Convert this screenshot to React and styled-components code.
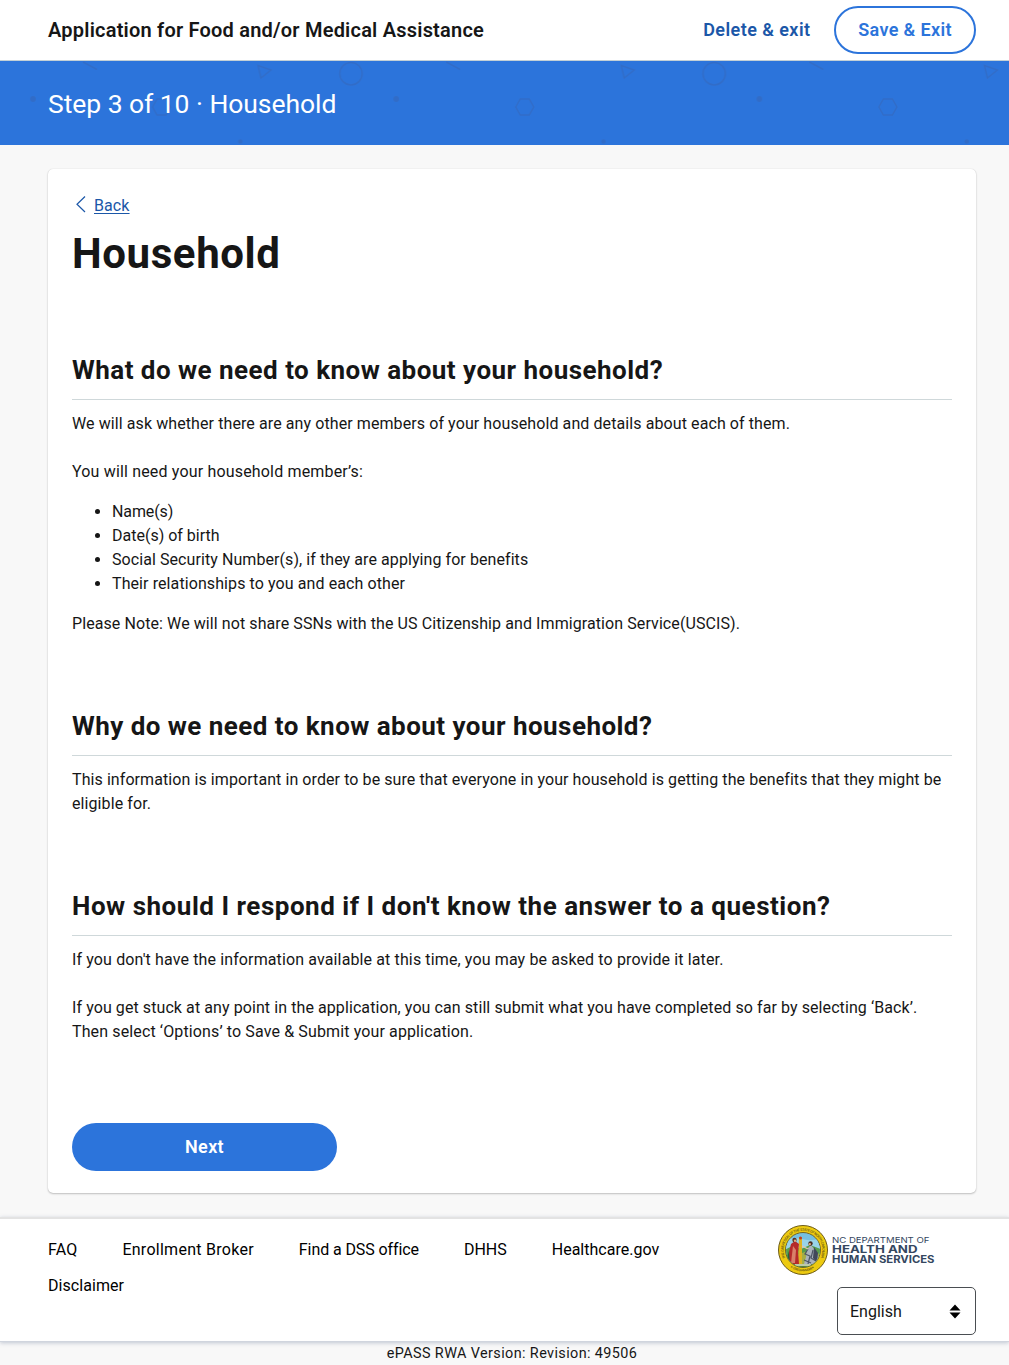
import React from "react";
import styled, { createGlobalStyle } from "styled-components";

const GlobalStyle = createGlobalStyle`
  * { box-sizing: border-box; }
  body {
    margin: 0;
    background: #f8f8f8;
    color: #161616;
    font: 400 16px/24px Roboto, "Liberation Sans", sans-serif;
  }
  h1, h2, p, ul { margin: 0; }
`;

const Page = styled.div`
  height: 1365px;
  overflow: hidden;
  display: flex;
  flex-direction: column;
`;

const Line = styled.span`
  display: block;
  white-space: nowrap;
  letter-spacing: ${(p) => p.$ls || 0}px;
`;

const Header = styled.header`
  flex: none;
  height: 61px;
  padding: 0 33px 0 48px;
  display: flex;
  align-items: center;
  background: #fff;
  border-bottom: 1px solid #c3d0d6;
`;

const AppTitle = styled.div`
  flex: 1;
  font-size: 20px;
  font-weight: 600;
  letter-spacing: 0.21px;
`;

const DeleteButton = styled.button`
  border: 0;
  padding: 0;
  margin-right: 23.5px;
  background: none;
  color: #1b57a8;
  font: 600 18px/24px Roboto, sans-serif;
  letter-spacing: 0.44px;
`;

const SaveButton = styled.button`
  width: 142px;
  height: 48px;
  padding: 0;
  border: 2px solid #2c74db;
  border-radius: 24px;
  background: #fff;
  color: #2c74db;
  font: 600 18px/24px Roboto, sans-serif;
  letter-spacing: 0.36px;
`;

const Banner = styled.div`
  flex: none;
  height: 84px;
  display: grid;
  align-items: center;
  background: #2c74db;
  color: #fff;
  > * { grid-area: 1 / 1; }
`;

const BannerArt = styled.svg`
  width: 100%;
  height: 84px;
`;

const StepTitle = styled.div`
  padding: 2px 48px 0;
  font-size: 26.5px;
  line-height: 36px;
  letter-spacing: -0.05px;
`;

const Card = styled.main`
  flex: none;
  height: 1024px;
  margin: 24px 33px 0 48px;
  padding: 25px 24px 23px;
  background: #fff;
  border-radius: 5px;
  box-shadow: 0 1px 2px rgba(0, 0, 0, 0.22), 0 0 1px rgba(0, 0, 0, 0.18);
`;

const BackLink = styled.a`
  display: flex;
  align-items: center;
  width: max-content;
  height: 24px;
  padding-left: 4px;
  gap: 8px;
  color: #1b57a8;
  svg { margin-top: -3px; }
  span {
    text-decoration: underline;
    text-underline-offset: 2px;
    letter-spacing: 0.1px;
  }
`;

const PageTitle = styled.h1`
  margin-top: 8px;
  font-size: 42px;
  line-height: 56px;
  font-weight: 700;
  letter-spacing: 0.6px;
`;

const Section = styled.section`
  margin-top: ${(p) => p.$top}px;
`;

const SectionTitle = styled.h2`
  height: 51px;
  padding-top: 3px;
  margin-bottom: 12px;
  border-bottom: 1px solid #cfd8da;
  font-size: 26px;
  line-height: 36px;
  font-weight: 700;
  white-space: nowrap;
  letter-spacing: ${(p) => p.$ls}px;
`;

const Text = styled.p`
  margin-bottom: ${(p) => p.$gap || 0}px;
`;

const Needs = styled.ul`
  padding-left: 40px;
  margin-bottom: 16px;
`;

const NextButton = styled.button`
  display: block;
  width: 265px;
  height: 48px;
  margin-top: 79px;
  padding: 0;
  border: 0;
  border-radius: 24px;
  background: #2c74db;
  color: #fff;
  font: 600 18px/24px Roboto, sans-serif;
  letter-spacing: 0.36px;
`;

const Footer = styled.footer`
  flex: none;
  height: 125px;
  margin-top: 24px;
  padding: 6px 33px 0 48px;
  display: flex;
  justify-content: space-between;
  background: #fff;
  color: #000;
  border-top: 2px solid #e3e3e3;
  border-bottom: 1px solid #d0d5de;
  box-shadow: 0 1px 4px rgba(90, 105, 140, 0.35);
`;

const Links = styled.nav`
  width: 640px;
  display: flex;
  flex-wrap: wrap;
  align-content: flex-start;
  gap: 12px 45px;
  padding-top: 13px;
`;

const FooterSide = styled.div`
  display: flex;
  flex-direction: column;
  align-items: flex-end;
`;

const Brand = styled.div`
  width: 198px;
  height: 50px;
  display: flex;
  align-items: center;
  gap: 3.5px;
`;

const Seal = styled.svg`
  width: 50px;
  height: 50px;
  flex: none;
`;

const LanguageSelect = styled.div`
  width: 139px;
  height: 48px;
  margin-top: 12px;
  padding: 0 14px 0 12px;
  display: flex;
  align-items: center;
  justify-content: space-between;
  border: 1px solid #4a4e52;
  border-radius: 5px;
  color: #161616;
  span { padding-top: 2px; }
`;

const Version = styled.div`
  flex: none;
  padding: 1px 0 0 15px;
  text-align: center;
  font-size: 14.4px;
  line-height: 22px;
  letter-spacing: 0.4px;
`;

const LINKS = [
  ["FAQ", 0.17],
  ["Enrollment Broker", 0.27],
  ["Find a DSS office", -0.1],
  ["DHHS", 0],
  ["Healthcare.gov", 0.02],
  ["Disclaimer", 0.06],
];

function BannerPattern() {
  return (
    <BannerArt aria-hidden="true">
      <defs>
        <pattern id="shapes" width="363.2" height="84" patternUnits="userSpaceOnUse">
          <g fill="none" stroke="#3566b8" strokeOpacity=".55" strokeWidth="1.5">
            <circle cx="351" cy="12.7" r="11.2" />
            <path d="M258 4.5l13 4.5-10 8z" />
            <path d="M83 1l14 7.5" />
            <path d="M152.500 46l4.500-8h9l4.500 8-4.500 8h-9z" />
          </g>
          <g fill="#3566b8" fillOpacity=".55">
            <circle cx="33" cy="38" r="2.900" />
            <circle cx="240.300" cy="80.500" r="2.300" />
          </g>
        </pattern>
      </defs>
      <rect width="100%" height="84" fill="url(#shapes)" />
    </BannerArt>
  );
}

function StateSeal() {
  return (
    <Seal viewBox="0 0 50 50" aria-hidden="true">
      <defs>
        <clipPath id="scene"><circle cx="25" cy="25" r="17" /></clipPath>
        <path id="ringTop" d="M7.400 33A19.300 19.300 0 1 1 42.600 33" />
        <path id="ringBottom" d="M11.500 41.500A21.500 21.500 0 0 0 38.500 41.500" />
      </defs>
      <circle cx="25" cy="25" r="24.500" fill="#edca10" stroke="#6d5c1a" />
      <circle cx="25" cy="25" r="17.500" fill="#75bfe0" stroke="#75651f" />
      <g clipPath="url(#scene)">
        <path d="M5 16q9-5 19-2t20-2v14H5z" fill="#99d3e8" />
        <path d="M5 26l9-5 9 3 9-4 13 5v20H5z" fill="#589d4c" />
        <path d="M18 30l15-5 13 6v14H14z" fill="#a3ae47" />
        <path d="M21 12h3v27h-4z" fill="#dfb422" />
        <circle cx="22.500" cy="13" r="1.500" fill="#bc3c24" />
        <path d="M13 19l4-3 4 3-1 8 1 12H10l1-12z" fill="#b52a2b" />
        <path d="M15 21l3 4-1 13h-4z" fill="#d9806a" />
        <path d="M11 26l-2 7 3 6z" fill="#236538" />
        <circle cx="16.500" cy="15" r="2.200" fill="#563122" />
        <circle cx="17" cy="15.800" r="1.200" fill="#e2ad7d" />
        <path d="M29 24l4-4 4 5 4 8-2 6H26l2-7z" fill="#aab2bd" />
        <path d="M30 24l-3 5 5 2-2 8M35 25l-2 8 5 3M26 35l7 3" fill="none" stroke="#4d5667" strokeWidth="1.200" />
        <path d="M36 22l4 6-1 10-4-5z" fill="#41485a" />
        <circle cx="32.500" cy="18.500" r="2.200" fill="#4a2d22" />
        <circle cx="31.800" cy="19.100" r="1.200" fill="#e0ab7c" />
        <path d="M24 21l6 3" stroke="#e8c5a2" strokeWidth="1.300" />
        <path d="M12 39h28v5H12z" fill="#4c8142" />
        <path d="M17 40h16" stroke="#e5e3ca" strokeWidth="1.500" />
      </g>
      <g fill="#6b5914" fontFamily="Roboto, sans-serif" fontWeight="500">
        <text fontSize="3.600" textLength="76"><textPath href="#ringTop">THE GREAT SEAL OF THE STATE OF NORTH CAROLINA</textPath></text>
        <text fontSize="3" textLength="26"><textPath href="#ringBottom" startOffset="1">★ ESSE QUAM VIDERI ★</textPath></text>
      </g>
    </Seal>
  );
}

function Wordmark() {
  return (
    <svg width="106" height="50" fill="#34475f" fontFamily="Inter, sans-serif">
      <text x="0" y="17.600" fontSize="7.800" textLength="97.500" lengthAdjust="spacingAndGlyphs">NC DEPARTMENT OF</text>
      <text x="0" y="28.300" fontSize="10.400" fontWeight="700" textLength="85.500" lengthAdjust="spacingAndGlyphs">HEALTH AND</text>
      <text x="0" y="38" fontSize="10.400" fontWeight="700" textLength="102.500" lengthAdjust="spacingAndGlyphs">HUMAN SERVICES</text>
    </svg>
  );
}

export default function App() {
  return (
    <Page>
      <GlobalStyle />
      <Header>
        <AppTitle>Application for Food and/or Medical Assistance</AppTitle>
        <DeleteButton>Delete &amp; exit</DeleteButton>
        <SaveButton>Save &amp; Exit</SaveButton>
      </Header>
      <Banner>
        <BannerPattern />
        <StepTitle>Step 3 of 10 · Household</StepTitle>
      </Banner>
      <Card>
        <BackLink>
          <svg width="10" height="17" viewBox="0 0 10 17" fill="none" stroke="currentColor" strokeWidth="1.2">
            <path d="M9 .5L1 8.250 9 16" />
          </svg>
          <span>Back</span>
        </BackLink>
        <PageTitle>Household</PageTitle>
        <Section $top={67}>
          <SectionTitle $ls={0.47}>What do we need to know about your household?</SectionTitle>
          <Text $gap={24}>
            <Line $ls={0.091}>We will ask whether there are any other members of your household and details about each of them.</Line>
          </Text>
          <Text $gap={16}>
            <Line $ls={0.168}>You will need your household member’s:</Line>
          </Text>
          <Needs>
            <li><Line $ls={-0.1}>Name(s)</Line></li>
            <li><Line>Date(s) of birth</Line></li>
            <li><Line $ls={0.075}>Social Security Number(s), if they are applying for benefits</Line></li>
            <li><Line $ls={0.092}>Their relationships to you and each other</Line></li>
          </Needs>
          <Text>
            <Line $ls={0.085}>Please Note: We will not share SSNs with the US Citizenship and Immigration Service(USCIS).</Line>
          </Text>
        </Section>
        <Section $top={69}>
          <SectionTitle $ls={0.455}>Why do we need to know about your household?</SectionTitle>
          <Text>
            <Line $ls={0.08}>This information is important in order to be sure that everyone in your household is getting the benefits that they might be</Line>
            <Line $ls={0.09}>eligible for.</Line>
          </Text>
        </Section>
        <Section $top={69}>
          <SectionTitle $ls={0.518}>How should I respond if I don't know the answer to a question?</SectionTitle>
          <Text $gap={24}>
            <Line $ls={0.125}>If you don't have the information available at this time, you may be asked to provide it later.</Line>
          </Text>
          <Text>
            <Line $ls={0.084}>If you get stuck at any point in the application, you can still submit what you have completed so far by selecting ‘Back’.</Line>
            <Line $ls={0.125}>Then select ‘Options’ to Save &amp; Submit your application.</Line>
          </Text>
        </Section>
        <NextButton>Next</NextButton>
      </Card>
      <Footer>
        <Links>
          {LINKS.map(([label, ls]) => (
            <Line as="a" key={label} $ls={ls}>{label}</Line>
          ))}
        </Links>
        <FooterSide>
          <Brand>
            <StateSeal />
            <Wordmark />
          </Brand>
          <LanguageSelect>
            <span>English</span>
            <svg width="12" height="15" viewBox="0 0 12 15" fill="#000">
              <path d="M.500 6.500L6 .5l5.500 6zM.500 8.500h11L6 14.500z" />
            </svg>
          </LanguageSelect>
        </FooterSide>
      </Footer>
      <Version>ePASS RWA Version: Revision: 49506</Version>
    </Page>
  );
}
